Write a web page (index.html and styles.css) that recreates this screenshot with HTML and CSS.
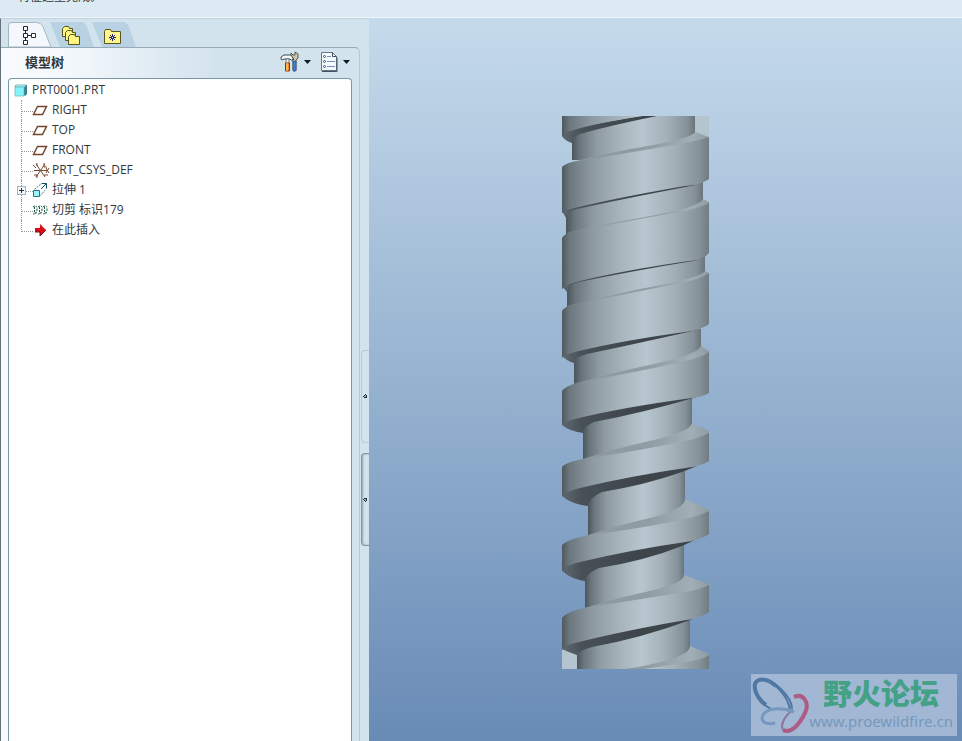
FILE: index.html
```html
<!DOCTYPE html>
<html lang="zh-CN">
<head>
<meta charset="utf-8">
<title>PRT0001.PRT</title>
<link rel="stylesheet" href="styles.css">
</head>
<body>
<header class="message"><p>特征造型完成。</p></header>
<div class="workspace">
  <aside class="navigator">
    <nav class="tabs">
      <button class="tab active" aria-label="模型树">
        <svg class="tab-shape" viewBox="0 0 44 26" preserveAspectRatio="none"><path d="M.5 26V4Q.5 .5 4 .5H29Q33 .5 35 5L43 26Z" fill="#f4f8fc" stroke="#a3b4be"/></svg>
        <svg class="icon" width="20" height="20" viewBox="0 0 20 20" fill="#fff" stroke="#222a30"><path d="M6.500 5v10M8 10.500h5"/><path d="M4.500 1.500h4v4h-4zM4.500 8.500h4v4h-4zM4.500 15.500h4v4h-4zM12.500 8.500h4v4h-4z"/></svg>
      </button>
      <button class="tab" aria-label="文件夹浏览器">
        <svg class="tab-shape" viewBox="0 0 44 26" preserveAspectRatio="none"><path d="M0 0H31Q35 0 37 5L44 26H10L2 5Z" fill="#b8d1e3"/></svg>
        <svg class="icon" width="20" height="20" viewBox="0 0 20 20" fill="#fff582" stroke="#57551f"><path d="M1.500 11.500v-8l2-2h4l1 2h3v8z"/><path d="M4.500 15.500v-8l2-2h4l1 2h3v8z"/><path d="M7.500 19.500v-8l2-2h4l1 2h4v8z"/></svg>
      </button>
      <button class="tab" aria-label="收藏夹">
        <svg class="tab-shape" viewBox="0 0 44 26" preserveAspectRatio="none"><path d="M0 0H31Q35 0 37 5L44 26H10L2 5Z" fill="#b8d1e3"/></svg>
        <svg class="icon" width="20" height="20" viewBox="0 0 20 20"><path d="M1.500 18.500v-12l1-2h5l1 2h9v12z" fill="#fff58a" stroke="#57551f"/><path d="M9.500 9v7M6 12.500h7M7 10l5 5M12 10l-5 5" stroke="#23286f"/><path d="M9 12h1v1H9z" fill="#fff"/></svg>
      </button>
    </nav>
    <section class="panel">
      <div class="panel-head">
        <h1>模型树</h1>
        <button class="tool" aria-label="设置">
          <svg width="32" height="22" viewBox="0 0 32 22"><path d="M14 8l-3-3V2l2 2h2V1l3 2v4l-2 2v10q-2 2-3 0V9z" fill="#c9c7a8" stroke="#55564a"/><path d="M13 10h3v10h-3z" fill="#4380cc" stroke="#294e87" stroke-width=".7"/><path d="M1 8V6l3-2h7l2 3v2h-2l-1-1H4L2 9z" fill="#f3f5f6" stroke="#444d53"/><path d="M6 8h3v5H6z" fill="#eee" stroke="#555" stroke-width=".7"/><path d="M5.500 12h4v8h-4z" fill="#f28b26" stroke="#803618"/><path d="M7 12v8" stroke="#ffe66b"/><path d="M24 9h7l-3.500 4z" fill="#101a22"/></svg>
        </button>
        <button class="tool" aria-label="显示">
          <svg width="32" height="22" viewBox="0 0 32 22"><path d="M1.500 1.500h11l4 4v14h-15z" fill="#f4f8ff" stroke="#657983"/><path d="M12.500 1.500v4h4M2 20.500h15v-14" fill="none" stroke="#405262"/><path d="M7 5.500h4M7 10.500h8M7 15.500h8" stroke="#7590ba"/><g fill="#fff" stroke="#46545c"><circle cx="4.500" cy="5.500" r="1"/><circle cx="4.500" cy="10.500" r="1"/><circle cx="4.500" cy="15.500" r="1"/></g><path d="M23 9h7l-3.500 4z" fill="#101a22"/></svg>
        </button>
      </div>
      <div class="tree">
        <div class="root"><svg width="16" height="16" viewBox="0 0 16 16"><path d="M1 5l2-2h10v9l-2 2z" fill="#367f8a"/><path d="M1 4l1-1h10l-1 2H1z" fill="#cafcff" stroke="#5599a0" stroke-width=".7"/><path d="M1 5h9v9H1z" fill="#83f5fa" stroke="#5eb5bd" stroke-width=".7"/></svg><span>PRT0001.PRT</span></div>
        <ul>
          <li><svg width="18" height="16" viewBox="0 0 18 16"><path d="M1.500 12.500l4-8h9l-4 8z" fill="#fff" stroke="#75472c" stroke-width="1.500"/></svg><span>RIGHT</span></li>
          <li><svg width="18" height="16" viewBox="0 0 18 16"><path d="M1.500 12.500l4-8h9l-4 8z" fill="#fff" stroke="#75472c" stroke-width="1.500"/></svg><span>TOP</span></li>
          <li><svg width="18" height="16" viewBox="0 0 18 16"><path d="M1.500 12.500l4-8h9l-4 8z" fill="#fff" stroke="#75472c" stroke-width="1.500"/></svg><span>FRONT</span></li>
          <li><svg width="18" height="16" viewBox="0 0 18 16" fill="none" stroke="#75472c"><path d="M2 8.500h13M4 2l9 13M13 2L4 15"/><path d="M1 3l3 3M5 1v3M12 1v4h3M14 6l3 5M17 6l-3 5M2 13h3v3M12 13h4"/></svg><span>PRT_CSYS_DEF</span></li>
          <li><button class="expand" aria-label="展开"></button><svg width="18" height="16" viewBox="0 0 18 16"><path d="M2.500 7.500l7-6h5v5l-6 7" fill="#fff" stroke="#287882" stroke-dasharray="2 1"/><path d="M9 7l5-5M10 1.500h4.500V6" fill="none" stroke="#164d58"/><path d="M1.500 8.500h6v6h-6z" fill="#98f4f5" stroke="#28757b"/></svg><span>拉伸 1</span></li>
          <li><svg width="18" height="16" viewBox="0 0 18 16" fill="none" stroke="#14573a"><path d="M1 5q4-3 4 2t-4 5M6 5q4-3 4 2t-4 5M11 5q4-3 4 2t-4 5" stroke-dasharray="2 1"/><path d="M2.500 5v6h3M7.500 5v6h3M12.500 5v6h3" stroke-dasharray="2 1"/></svg><span>切剪 标识179</span></li>
          <li><svg width="18" height="16" viewBox="0 0 18 16"><path d="M3 6h5V2l6 6-6 6v-4H3z" fill="#d90c18"/><path d="M3 10h5v4l6-6" fill="none" stroke="#6f1117"/></svg><span>在此插入</span></li>
        </ul>
      </div>
    </section>
    <div class="sashes"><button aria-label="折叠导航器"></button><button class="raised" aria-label="浏览器"></button></div>
  </aside>
  <main class="viewport">
    <svg class="screw" viewBox="562 116 147 553" role="img" aria-label="螺杆">
      <defs>
        <linearGradient id="band" gradientUnits="userSpaceOnUse" x1="562" x2="709" y1="0" y2="0"><stop offset="0" stop-color="#4f595f"/><stop offset=".05" stop-color="#6b767d"/><stop offset=".2" stop-color="#8d99a1"/><stop offset=".4" stop-color="#a8b5bd"/><stop offset=".56" stop-color="#b8c6cf"/><stop offset=".75" stop-color="#a5b2ba"/><stop offset=".93" stop-color="#87939a"/><stop offset="1" stop-color="#707b82"/></linearGradient>
        <linearGradient id="core"><stop offset="0" stop-color="#4b555b"/><stop offset=".06" stop-color="#69747b"/><stop offset=".2" stop-color="#8f9ba3"/><stop offset=".4" stop-color="#a8b5bd"/><stop offset=".57" stop-color="#b8c6cf"/><stop offset=".78" stop-color="#a2afb7"/><stop offset=".94" stop-color="#859198"/><stop offset="1" stop-color="#69747b"/></linearGradient>
        <linearGradient id="under" gradientUnits="userSpaceOnUse" x1="562" x2="640" y1="0" y2="0"><stop offset="0" stop-color="#5d686e"/><stop offset=".25" stop-color="#485157"/><stop offset="1" stop-color="#3d454b"/></linearGradient>
        <linearGradient id="ledge" gradientUnits="userSpaceOnUse" x1="590" x2="709" y1="0" y2="0"><stop offset="0" stop-color="#8c989f"/><stop offset=".5" stop-color="#919da5"/><stop offset=".85" stop-color="#a2aeb5"/><stop offset="1" stop-color="#8f9ba2"/></linearGradient>
      </defs>
      <path d="M695 116h14v21h-14zM562 650h15v19h-15z" fill="#b5c5d0"/>
      <g fill="url(#core)"><path d="M572 116H695V160H572z"/><path d="M566 182H703V238H566z"/><path d="M567 256H705V312H567z"/><path d="M574 329H701V390H574z"/><path d="M583 398H692V465H583z"/><path d="M588 469H685V542H588z"/><path d="M585 543H684V614H585z"/><path d="M577 619H690V669H577z"/></g>
      <g fill="url(#under)"><path d="M562 136Q565 141 572 143Q573 137 580 134Q612 125 657 116H640L562 130z"/><path d="M562 211L566 218Q567 211 577 209Q622 199 696 185L620 190L562 205z"/><path d="M562 286L567 292Q569 284 579 282Q632 271 699 260L620 264L562 280z"/><path d="M562 355Q566 361 574 363Q575 357 587 354Q635 344 697 330L620 336L562 350z"/><path d="M562 425Q569 431 583 433Q583 427 594 422Q642 413 697 397L620 403L562 420z"/><path d="M562 496Q571 504 588 506Q589 498 602 492Q645 485 682 472L697 466L620 472L562 490z"/><path d="M562 571Q571 579 585 581Q585 574 599 568Q644 561 682 546L697 539L620 547L562 565z"/><path d="M562 649Q568 652 577 655Q578 651 592 647Q642 638 693 619L620 627L562 645z"/></g>
      <g fill="url(#ledge)"><path d="M572 162Q600 155 630 149Q692 139 695 132L709 137V143L600 160z"/><path d="M566 233Q600 225 645 217Q700 207 703 199L709 202V210L600 230z"/><path d="M567 306Q600 298 640 289Q701 278 705 271L709 273V280L600 303z"/><path d="M574 384Q600 376 640 367Q699 355 701 346L709 351V360L600 382z"/><path d="M583 459Q610 450 645 442Q691 432 692 423L709 431V440L600 459z"/><path d="M588 535Q615 526 650 518Q685 509 685 499L709 510V520L600 537z"/><path d="M585 608Q612 599 650 591Q684 583 684 575L709 584V594L600 608z"/><path d="M625 669Q690 659 690 646L709 654V669z"/></g>
      <g fill="url(#band)"><path d="M562 116H643Q596 123 574 130Q565 132 562 137z"/><path d="M562 167Q565 164 572 162Q647 150 690 142Q704 139 709 137V179Q705 182 697 184Q625 196 579 207Q567 209 562 213z"/><path d="M562 238Q564 234 574 231Q640 219 690 210Q704 206 709 203V253Q706 257 696 260Q625 270 580 281Q567 284 562 289z"/><path d="M562 311Q564 307 574 304Q642 291 690 281Q704 277 709 273V324Q704 328 692 331Q625 340 579 351Q566 354 562 358z"/><path d="M562 391Q566 385 585 381Q648 370 690 360Q704 356 709 352V393Q702 397 692 398Q625 407 579 418Q566 421 562 425z"/><path d="M562 467Q567 461 590 458Q648 449 690 440Q704 436 709 433V461Q702 465 692 467Q630 476 580 488Q567 491 562 496z"/><path d="M562 545Q568 539 590 535Q650 527 690 518Q704 514 709 511V534Q703 538 692 541Q630 550 580 562Q567 565 562 571z"/><path d="M562 618Q567 611 589 607Q650 598 690 591Q704 588 709 585V612Q703 616 692 619Q627 630 579 642Q566 645 562 649z"/><path d="M643 669Q682 664 700 659Q707 657 709 655V669z"/></g>
    </svg>
    <div class="watermark">
      <svg width="60" height="60" viewBox="0 0 60 60" fill="none"><path d="M20 34C6 27-2 8 8 5C21 1 41 22 41 34" stroke="#4f78a4" stroke-width="2"/><path d="M15 30C4 22 0 8 8 5Q16 3 25 11" stroke="#4f78a4" stroke-width="4"/><path d="M39 36C38 22 24 7 12 5" stroke="#4f78a4" stroke-width="2"/><path d="M43 22C52 18 59 27 54 38C48 50 40 59 32 55" stroke="#ad5d85" stroke-width="4"/><path d="M32 55C29 50 34 40 42 35" stroke="#8d739f" stroke-width="2"/><path d="M43 37C30 32 16 33 12 40C9 47 15 50 24 48" stroke="#7897bf" stroke-width="3"/></svg>
      <div><strong>野火论坛</strong><span>www.proewildfire.cn</span></div>
    </div>
  </main>
</div>
</body>
</html>
```
FILE: styles.css
```css
* { box-sizing: border-box; }
body {
  margin: 0;
  height: 100vh;
  display: flex;
  flex-direction: column;
  overflow: hidden;
  background: #d5e4ee;
  color: #30383e;
  font: 12px/20px "Open Sans", "Noto Sans CJK SC", sans-serif;
}
button { border: 0; padding: 0; background: none; }
svg { display: block; flex: none; }
.message {
  flex: none;
  height: 18px;
  overflow: hidden;
  display: flex;
  align-items: flex-end;
  padding: 0 18px 10px;
  background: #dceaf3;
  border-bottom: 1px solid #edf5fa;
}
.message p { margin: 0; }
.workspace { flex: 1; min-height: 0; display: flex; }
.navigator {
  flex: none;
  width: 369px;
  display: grid;
  grid-template: 28px 1fr / 1fr 9px;
  border-left: 1px solid #65717a;
  border-top: 1px solid #c2d3de;
  background: #d3e3ed;
}
.tabs { grid-column: 1 / 3; display: flex; padding: 3px 0 0 7px; }
.tab { position: relative; width: 42px; height: 25px; }
.tab-shape { position: absolute; left: 0; top: 0; width: 44px; height: 25px; }
.tab .icon { position: relative; margin: 0 0 0 11px; }
.panel {
  min-height: 0;
  display: flex;
  flex-direction: column;
  padding: 0 7px 0 7px;
  border-top: 1px solid #98aab5;
  border-right: 1px solid #b7c8d3;
  border-radius: 0 5px 0 0;
  background: linear-gradient(90deg, #f9fbfe 0, #f4f8fc 18%, #d3e3ed 60%);
}
.panel-head { flex: none; height: 30px; display: flex; align-items: center; gap: 8px; padding-bottom: 2px; }
.panel-head h1 { flex: 1; margin: 0; padding-left: 17px; font-size: 13px; line-height: 20px; }
.tree {
  flex: 1;
  padding: 1px 5px;
  border: 1px solid #7898a9;
  border-bottom: 0;
  border-radius: 4px 4px 0 0;
  background: #fff;
}
.root, .tree li { display: flex; align-items: center; height: 20px; white-space: pre; }
.root { gap: 2px; }
.tree ul { margin: 0; padding: 0 0 0 7px; list-style: none; }
.tree li { position: relative; gap: 2px; padding-left: 11px; }
.tree li::before {
  content: "";
  position: absolute;
  left: 0;
  top: 0;
  width: 11px;
  height: 11px;
  border-left: 1px dotted #949da3;
  border-bottom: 1px dotted #949da3;
}
.tree li:not(:last-child)::after {
  content: "";
  position: absolute;
  left: 0;
  top: 11px;
  height: 9px;
  border-left: 1px dotted #949da3;
}
.expand {
  position: absolute;
  z-index: 1;
  left: -4px;
  top: 6px;
  width: 9px;
  height: 9px;
  border: 1px solid #9eb5c2;
  background: linear-gradient(#24333d, #24333d) center / 5px 1px no-repeat, linear-gradient(#24333d, #24333d) center / 1px 5px no-repeat, #f2f8fc;
}
.sashes { display: flex; flex-direction: column; justify-content: center; gap: 10px; padding: 108px 0 0 1px; }
.sashes button {
  height: 93px;
  border: 1px solid #b7cad6;
  border-right: 0;
  border-radius: 4px 0 0 4px;
  background: radial-gradient(circle, #9fb0bc 0 1px, #26343e 1px 2px, transparent 2px);
}
.sashes .raised { border-color: #8296a3; box-shadow: inset 1px 0 2px #8fa4b2; }
.viewport {
  flex: 1;
  min-width: 0;
  position: relative;
  display: flex;
  justify-content: center;
  align-items: center;
  padding: 25px 60px 0 0;
  background: linear-gradient(#c5daeb, #688bb6);
}
.screw { width: 147px; height: auto; }
.watermark {
  position: absolute;
  right: 5px;
  bottom: 5px;
  height: 62px;
  display: flex;
  align-items: center;
  padding-right: 4px;
  background: #a1b7d4;
}
.watermark div { display: flex; flex-direction: column; align-items: center; margin-left: -2px; padding-bottom: 4px; }
.watermark strong { color: #43a186; font: 900 29px/36px "Noto Sans CJK SC", sans-serif; }
.watermark span { color: #7897bc; font: 15px/22px "Noto Sans", sans-serif; }
```
